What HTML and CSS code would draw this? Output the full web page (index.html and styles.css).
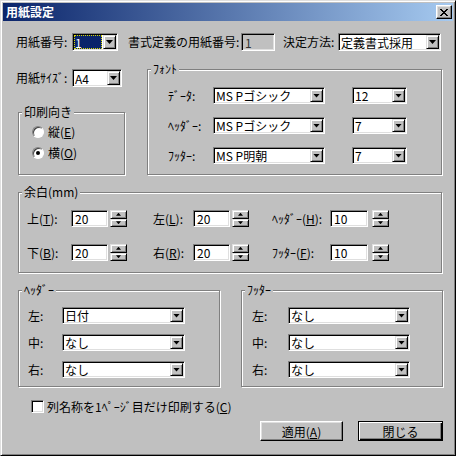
FILE: index.html
```html
<!DOCTYPE html>
<html lang="ja">
<head>
<meta charset="utf-8">
<title>用紙設定</title>
<link rel="stylesheet" href="styles.css">
</head>
<body>
<div class="dlg">
  <div class="title">
    <span class="title-text">用紙設定</span>
    <span class="close"><svg width="8" height="7" viewBox="0 0 8 7"><path d="M0 0h2v1H0z M6 0h2v1H6z M1 1h2v1H1z M5 1h2v1H5z M2 2h4v1H2z M3 3h2v1H3z M2 4h4v1H2z M1 5h2v1H1z M5 5h2v1H5z M0 6h2v1H0z M6 6h2v1H6z" fill="#000"/></svg></span>
  </div>
  <div class="content">
    <div class="row1">
      <span class="lbl w56">用紙番号:</span>
      <div class="sel h18 w46"><span class="val hl">1</span><span class="dd"><i class="tri"></i></span></div>
      <span class="lbl w113 ml10">書式定義の用紙番号:</span>
      <div class="inp h18 dis w34">1</div>
      <span class="lbl w55 ml8">決定方法:</span>
      <div class="sel h18 w103"><span class="val">定義書式採用</span><span class="dd"><i class="tri"></i></span></div>
    </div>

    <div class="row2">
      <div class="leftcol">
        <div class="sizerow">
          <span class="lbl w56">用紙ｻｲｽﾞ:</span>
          <div class="sel h18 w50"><span class="val">A4</span><span class="dd"><i class="tri"></i></span></div>
        </div>
        <div class="grp orient">
          <span class="lg">印刷向き</span>
          <div class="rrow"><span class="radio"></span><span class="lbl">縦(<u>E</u>)</span></div>
          <div class="rrow"><span class="radio on"></span><span class="lbl">横(<u>O</u>)</span></div>
        </div>
      </div>
      <div class="grp font">
        <span class="lg">ﾌｫﾝﾄ</span>
        <div class="frow">
          <span class="lbl w45">ﾃﾞｰﾀ:</span>
          <div class="sel w112"><span class="val">MS Pゴシック</span><span class="dd"><i class="tri"></i></span></div>
          <div class="sel w55 ml27"><span class="val">12</span><span class="dd"><i class="tri"></i></span></div>
        </div>
        <div class="frow">
          <span class="lbl w45">ﾍｯﾀﾞｰ:</span>
          <div class="sel w112"><span class="val">MS Pゴシック</span><span class="dd"><i class="tri"></i></span></div>
          <div class="sel w55 ml27"><span class="val">7</span><span class="dd"><i class="tri"></i></span></div>
        </div>
        <div class="frow">
          <span class="lbl w45">ﾌｯﾀｰ:</span>
          <div class="sel w112"><span class="val">MS P明朝</span><span class="dd"><i class="tri"></i></span></div>
          <div class="sel w55 ml27"><span class="val">7</span><span class="dd"><i class="tri"></i></span></div>
        </div>
      </div>
    </div>

    <div class="grp margin">
      <span class="lg">余白(mm)</span>
      <div class="mrow">
        <span class="lbl w44">上(<u>T</u>):</span>
        <div class="inp w37">20</div>
        <div class="spin ml2"><b><i class="up"></i></b><b><i class="down"></i></b></div>
        <span class="lbl w40 ml26">左(<u>L</u>):</span>
        <div class="inp w37">20</div>
        <div class="spin ml2"><b><i class="up"></i></b><b><i class="down"></i></b></div>
        <span class="lbl w58 ml23">ﾍｯﾀﾞｰ(<u>H</u>):</span>
        <div class="inp w38">10</div>
        <div class="spin ml4"><b><i class="up"></i></b><b><i class="down"></i></b></div>
      </div>
      <div class="mrow">
        <span class="lbl w44">下(<u>B</u>):</span>
        <div class="inp w37">20</div>
        <div class="spin ml2"><b><i class="up"></i></b><b><i class="down"></i></b></div>
        <span class="lbl w40 ml26">右(<u>R</u>):</span>
        <div class="inp w37">20</div>
        <div class="spin ml2"><b><i class="up"></i></b><b><i class="down"></i></b></div>
        <span class="lbl w58 ml23">ﾌｯﾀｰ(<u>F</u>):</span>
        <div class="inp w38">10</div>
        <div class="spin ml4"><b><i class="up"></i></b><b><i class="down"></i></b></div>
      </div>
    </div>

    <div class="hf">
      <div class="grp hdr">
        <span class="lg">ﾍｯﾀﾞｰ</span>
        <div class="hrow"><span class="lbl w34">左:</span><div class="sel w123"><span class="val">日付</span><span class="dd"><i class="tri"></i></span></div></div>
        <div class="hrow"><span class="lbl w34">中:</span><div class="sel w123"><span class="val">なし</span><span class="dd"><i class="tri"></i></span></div></div>
        <div class="hrow"><span class="lbl w34">右:</span><div class="sel w123"><span class="val">なし</span><span class="dd"><i class="tri"></i></span></div></div>
      </div>
      <div class="grp ftr">
        <span class="lg">ﾌｯﾀｰ</span>
        <div class="hrow"><span class="lbl w36">左:</span><div class="sel w122"><span class="val">なし</span><span class="dd"><i class="tri"></i></span></div></div>
        <div class="hrow"><span class="lbl w36">中:</span><div class="sel w122"><span class="val">なし</span><span class="dd"><i class="tri"></i></span></div></div>
        <div class="hrow"><span class="lbl w36">右:</span><div class="sel w122"><span class="val">なし</span><span class="dd"><i class="tri"></i></span></div></div>
      </div>
    </div>

    <div class="chk">
      <span class="box"></span>
      <span class="lbl">列名称を1ﾍﾟｰｼﾞ目だけ印刷する(<u>C</u>)</span>
    </div>

    <div class="btns">
      <div class="btn w83">適用(<u>A</u>)</div>
      <div class="btn def w85">閉じる</div>
    </div>
  </div>
</div>
</body>
</html>
```

FILE: styles.css
```css
body {
  margin: 0;
  background: #ffffff;
  font-family: "Noto Sans CJK JP", "Noto Sans", sans-serif;
  font-size: 12px;
  color: #000;
}

.dlg {
  width: 456px;
  height: 456px;
  box-sizing: border-box;
  border: 1px solid;
  border-color: #dfdfdf #000 #000 #dfdfdf;
  box-shadow: inset 1px 1px #fff, inset -1px -1px #808080;
  padding: 2px;
  background: #c0c0c0;
}

.title {
  height: 18px;
  display: flex;
  align-items: center;
  justify-content: space-between;
  background: linear-gradient(to right, #0a246a, #a6caf0);
  color: #fff;
  font-weight: bold;
  padding-left: 3px;
}
.title-text { line-height: 18px; }

.close {
  width: 16px;
  height: 14px;
  box-sizing: border-box;
  margin-right: 1px;
  background: #c0c0c0;
  border: 1px solid;
  border-color: #fff #000 #000 #fff;
  box-shadow: inset -1px -1px #808080, inset 1px 1px #dfdfdf;
  display: flex;
  align-items: center;
  justify-content: center;
}
.close svg { display: block; }

.content { padding-left: 13px; }

.lbl { flex: none; white-space: nowrap; line-height: 16px; }
u { text-decoration: underline; text-underline-offset: 1px; }

/* widths / margins */
.w34 { width: 34px; } .w36 { width: 36px; } .w37 { width: 37px; } .w38 { width: 38px; }
.w40 { width: 40px; } .w44 { width: 44px; } .w45 { width: 45px; } .w46 { width: 46px; }
.w50 { width: 50px; } .w55 { width: 55px; } .w56 { width: 56px; }
.w58 { width: 58px; } .w83 { width: 83px; } .w85 { width: 85px; } .w103 { width: 103px; }
.w112 { width: 112px; } .w113 { width: 113px; } .w122 { width: 122px; } .w123 { width: 123px; }
.ml2 { margin-left: 2px; } .ml4 { margin-left: 4px; } .ml8 { margin-left: 8px; } .ml10 { margin-left: 10px; }
.ml23 { margin-left: 23px; } .ml26 { margin-left: 26px; }
.ml27 { margin-left: 27px; }

/* sunken field */
.sel, .inp {
  flex: none;
  box-sizing: border-box;
  height: 17px;
  border: 1px solid;
  border-color: #808080 #fff #fff #808080;
  box-shadow: inset 1px 1px #000, inset -1px -1px #dfdfdf;
  background: #fff;
}
.h18 { height: 18px; }
.sel { display: flex; padding: 1px; }
.val {
  flex: 1;
  min-width: 0;
  padding-left: 1px;
  white-space: nowrap;
  display: flex;
  align-items: center;
  line-height: 13px;
}
.val.hl {
  background: #0a246a;
  color: #fff;
  outline: 1px dotted #d8d800;
  outline-offset: -1px;
  margin-right: 1px;
}
.inp {
  display: flex;
  align-items: center;
  padding: 0 3px;
  line-height: 13px;
}
.inp.dis { background: #c0c0c0; color: #333; }

.dd, .spin b, .btn {
  box-sizing: border-box;
  background: #c0c0c0;
  border: 1px solid;
  border-color: #dfdfdf #000 #000 #dfdfdf;
  box-shadow: inset 1px 1px #fff, inset -1px -1px #808080;
}
.dd {
  flex: none;
  width: 13px;
  display: flex;
  align-items: center;
  justify-content: center;
}
.tri {
  display: block;
  width: 7px;
  height: 4px;
  background: #000;
  clip-path: polygon(0 0, 100% 0, 50% 100%);
}

.spin {
  flex: none;
  width: 17px;
  height: 17px;
  display: flex;
  flex-direction: column;
}
.spin b {
  flex: 1;
  display: flex;
  align-items: center;
  justify-content: center;
}
.spin i { display: block; width: 5px; height: 3px; background: #000; }
.spin .up { clip-path: polygon(50% 0, 100% 100%, 0 100%); }
.spin .down { clip-path: polygon(0 0, 100% 0, 50% 100%); }

/* group boxes */
.grp {
  position: relative;
  flex: none;
  box-sizing: border-box;
  border: 1px solid #808080;
  box-shadow: inset 1px 1px #fff, 1px 1px #fff;
  display: flex;
  flex-direction: column;
}
.lg {
  position: absolute;
  top: -9px;
  left: 3px;
  padding: 0 2px;
  background: #c0c0c0;
  line-height: 16px;
  white-space: nowrap;
}

.row1 {
  margin-top: 12px;
  height: 18px;
  display: flex;
  align-items: center;
}

.row2 {
  margin-top: 18px;
  height: 106px;
  display: flex;
  align-items: flex-start;
}
.leftcol { flex: none; width: 110px; }
.sizerow { display: flex; align-items: center; height: 18px; }

.orient {
  margin-top: 25px;
  margin-left: 2px;
  width: 107px;
  height: 63px;
  padding: 10px 0 0 13px;
  gap: 4px;
}
.rrow { display: flex; align-items: center; height: 17px; gap: 4px; }
.radio {
  position: relative;
  flex: none;
  width: 12px;
  height: 12px;
  box-sizing: border-box;
  border-radius: 50%;
  border: 1px solid;
  border-color: #808080 #fff #fff #808080;
  background: #fff;
  box-shadow: inset 1px 1px #404040;
}
.radio.on::after {
  content: "";
  position: absolute;
  left: 3px;
  top: 3px;
  width: 4px;
  height: 4px;
  border-radius: 50%;
  background: #000;
}

.font {
  margin-left: 21px;
  width: 295px;
  height: 106px;
  padding: 17px 0 0 20px;
  gap: 13px;
}
.frow, .mrow, .hrow { display: flex; align-items: center; height: 17px; }

.margin {
  margin-top: 17px;
  margin-left: 2px;
  width: 424px;
  height: 81px;
  padding: 17px 0 0 8px;
  gap: 17px;
}

.hf { display: flex; margin-top: 17px; }
.hdr {
  margin-left: 2px;
  width: 202px;
  height: 97px;
  padding: 16px 0 0 9px;
  gap: 10px;
}
.ftr {
  margin-left: 21px;
  width: 202px;
  height: 97px;
  padding: 16px 0 0 10px;
  gap: 10px;
}

.chk {
  margin-top: 11px;
  height: 17px;
  display: flex;
  align-items: center;
  padding-left: 15px;
  gap: 3px;
}
.box {
  flex: none;
  width: 13px;
  height: 13px;
  box-sizing: border-box;
  border: 1px solid;
  border-color: #808080 #fff #fff #808080;
  box-shadow: inset 1px 1px #000, inset -1px -1px #dfdfdf;
  background: #fff;
}

.btns {
  margin-top: 6px;
  display: flex;
  padding-left: 244px;
  gap: 15px;
}
.btn {
  height: 20px;
  display: flex;
  align-items: center;
  justify-content: center;
  border-color: #fff #000 #000 #fff;
  box-shadow: inset -1px -1px #808080, inset 1px 1px #dfdfdf;
}
.btn.def {
  border-color: #000;
  box-shadow: inset 1px 1px #fff, inset -1px -1px #000, inset -2px -2px #808080;
}
```
